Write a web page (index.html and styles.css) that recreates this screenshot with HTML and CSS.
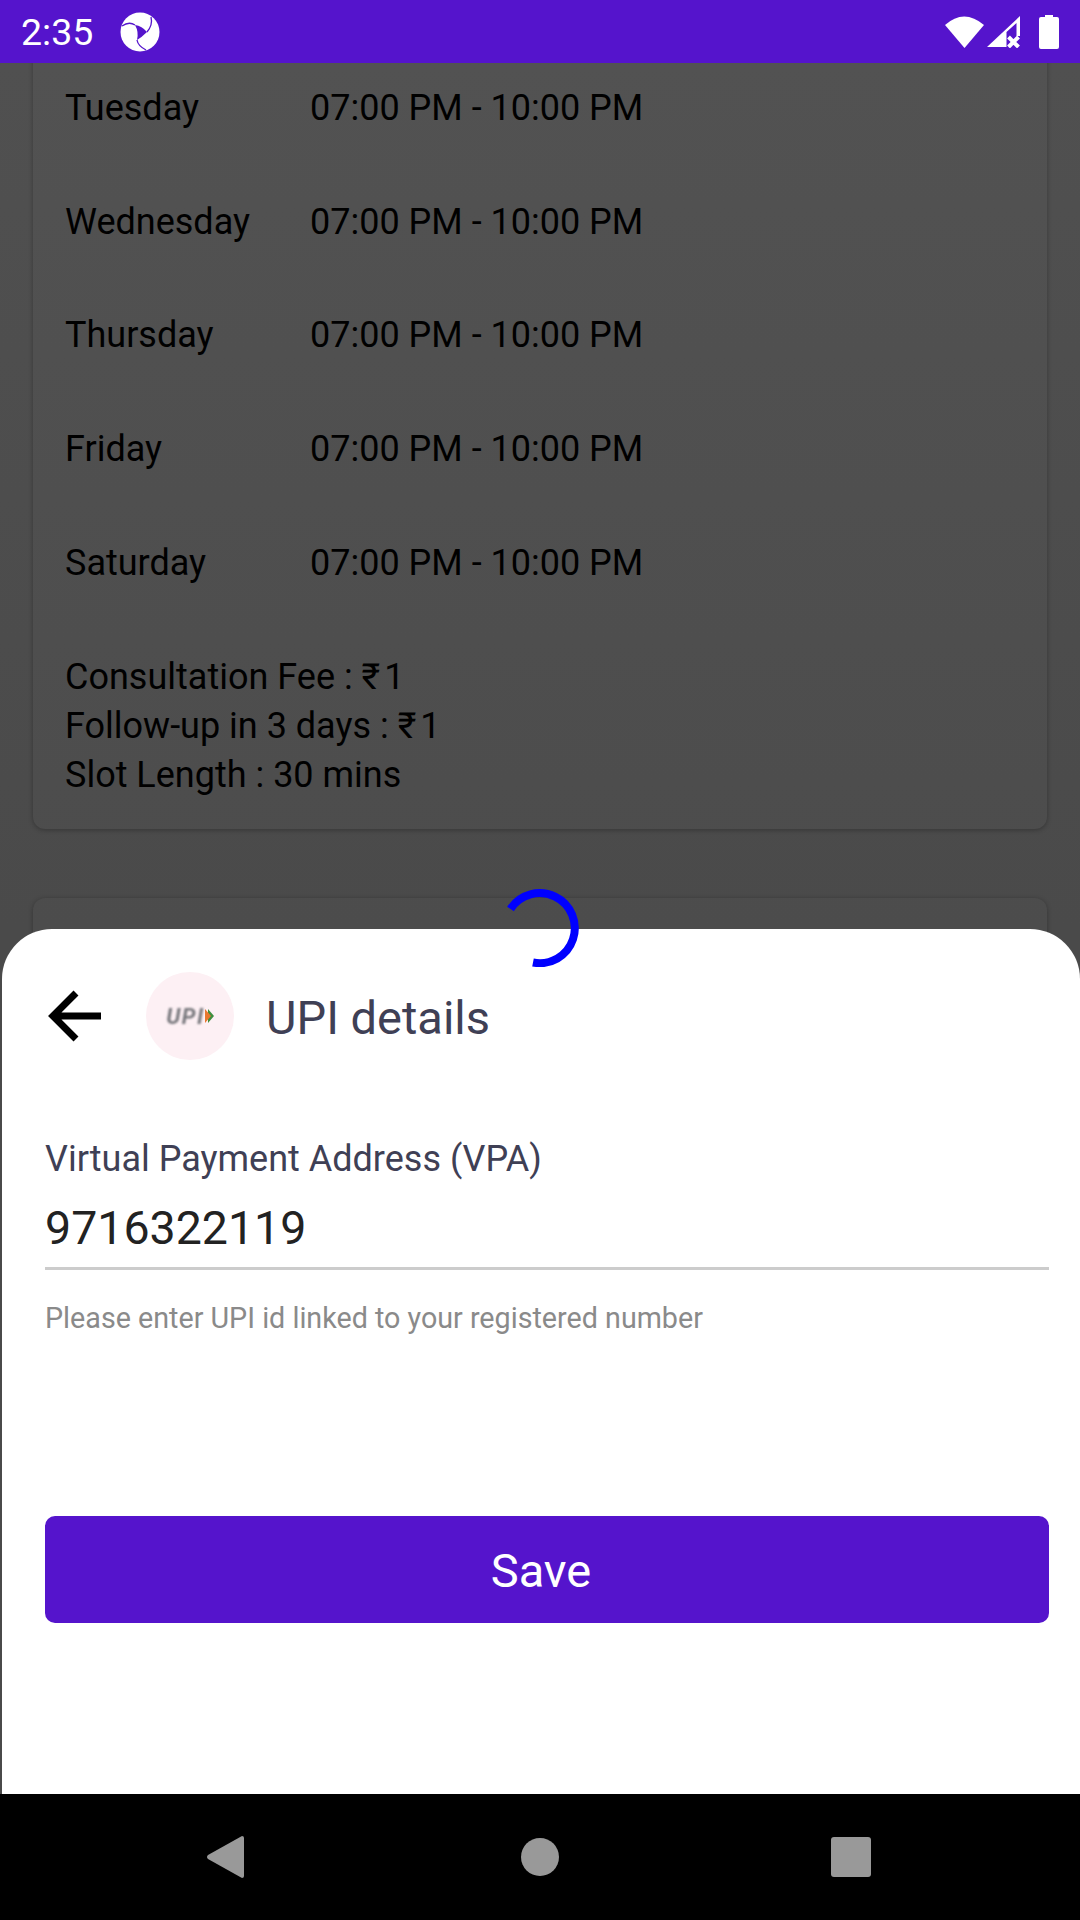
FILE: index.html
```html
<!DOCTYPE html>
<html>
<head>
  <meta charset="UTF-8">
  <title>UPI details</title>
  <link rel="stylesheet" href="styles.css">
</head>
<body>
  <div class="phone">
    <header class="status-bar">
      <span class="clock">2:35</span>
      <svg class="app-logo" viewBox="0 0 40 40">
        <circle cx="20" cy="20" r="19.5" fill="#fff"/>
        <path d="M15 13 Q22 14 27 20 Q22 25 17 28 Q19 20 15 13Z" fill="#5514cc"/>
        <g fill="none" stroke="#5514cc" stroke-width="1.300">
          <path d="M2 14 Q9 9 15 13"/>
          <path d="M31 5 Q33 13 27 20"/>
          <path d="M17 28 Q18 34 26 38"/>
        </g>
      </svg>
      <span class="status-spacer"></span>
      <svg class="wifi" viewBox="0 0 39 33"><path d="M0 10 Q19 -7 39 10 L19.500 33Z" fill="#fff"/></svg>
      <svg class="signal" viewBox="0 0 33 32">
        <path d="M0 31 L33 0 V31Z" fill="#fff"/>
        <path d="M19.500 31 V16 L29.500 7 V20 H33 V31Z" fill="#5514cc"/>
        <path d="M21.500 21 L31.500 31 M31.500 21 L21.500 31" stroke="#fff" stroke-width="4"/>
      </svg>
      <svg class="battery" viewBox="0 0 20 34"><path d="M6 0 H14 V2 H18 Q20 2 20 4 V32 Q20 34 18 34 H2 Q0 34 0 32 V4 Q0 2 2 2 H6Z" fill="#fff"/></svg>
    </header>

    <main class="screen">
      <section class="card card-hours">
        <div class="hours-row"><span class="day">Tuesday</span><span>07:00 PM - 10:00 PM</span></div>
        <div class="hours-row"><span class="day">Wednesday</span><span>07:00 PM - 10:00 PM</span></div>
        <div class="hours-row"><span class="day">Thursday</span><span>07:00 PM - 10:00 PM</span></div>
        <div class="hours-row"><span class="day">Friday</span><span>07:00 PM - 10:00 PM</span></div>
        <div class="hours-row"><span class="day">Saturday</span><span>07:00 PM - 10:00 PM</span></div>
        <div class="fees">
          <p>Consultation Fee : <span class="rupee">₹</span>1</p>
          <p>Follow-up in 3 days : <span class="rupee">₹</span>1</p>
          <p>Slot Length : 30 mins</p>
        </div>
      </section>
      <section class="card card-next"></section>

      <section class="sheet">
        <div class="sheet-head">
          <svg class="back" viewBox="0 0 53 52">
            <path d="M53 26 H5 M28 3 L5 26 L28 49" fill="none" stroke="#000" stroke-width="7"/>
          </svg>
          <div class="upi-badge">
            <span class="upi-mark">UPI</span>
            <svg class="upi-arrow" viewBox="0 0 9 14">
              <path d="M3 0 L9 7 L3 14Z" fill="#3f8f3f"/>
              <path d="M0 0 L6 7 L0 14Z" fill="#e8772e"/>
            </svg>
          </div>
          <h2 class="sheet-title">UPI details</h2>
        </div>
        <label class="field-label">Virtual Payment Address (VPA)</label>
        <div class="field-value">9716322119</div>
        <p class="field-help">Please enter UPI id linked to your registered number</p>
        <button class="save-btn">Save</button>
      </section>

      <svg class="spinner" viewBox="0 0 78 78">
        <path d="M9.500 20 A35 35 0 1 1 32 73.500" fill="none" stroke="#0000ff" stroke-width="8"/>
      </svg>
    </main>

    <footer class="nav-bar">
      <svg class="nav-back" viewBox="0 0 37 42"><path d="M35 0 Q37 0 37 2 V40 Q37 42 35 42 L1 23 Q-1 21 1 19Z" fill="#999"/></svg>
      <span class="nav-home"></span>
      <span class="nav-recent"></span>
    </footer>
  </div>
</body>
</html>
```

FILE: styles.css
```css
* {
  box-sizing: border-box;
}

html, body {
  margin: 0;
  padding: 0;
}

body {
  font-family: Roboto, "Liberation Sans", sans-serif;
  background: #000;
}

.phone {
  width: 1080px;
  height: 1920px;
  display: flex;
  flex-direction: column;
  overflow: hidden;
}

/* status bar */
.status-bar {
  height: 63px;
  flex: none;
  background: #5514cc;
  display: flex;
  align-items: center;
  padding: 0 21px;
  color: #fff;
}

.clock {
  font-size: 37.500px;
  width: 99px;
}

.app-logo {
  width: 40px;
  height: 40px;
}

.status-spacer {
  flex: 1;
}

.wifi {
  width: 39px;
  height: 33px;
}

.signal {
  width: 33px;
  height: 32px;
  margin-left: 3px;
}

.battery {
  width: 20px;
  height: 34px;
  margin-left: 19px;
}

/* dimmed screen behind the sheet */
.screen {
  flex: 1;
  position: relative;
  overflow: hidden;
  background: linear-gradient(#505050, #4a4a4a 866px);
}

.card {
  margin: 0 33px;
  background: rgba(255, 255, 255, 0.012);
  border-radius: 12px;
  box-shadow: 0 1px 5px rgba(0, 0, 0, 0.3);
}

.card-hours {
  margin-top: -20px;
  padding: 8px 32px 29px;
  color: #000;
  font-size: 36px;
}

.card-next {
  margin-top: 69px;
  height: 200px;
}

.hours-row {
  height: 113.800px;
  display: flex;
  align-items: center;
}

.day {
  width: 245px;
}

.fees {
  margin-top: 33px;
}

.fees p {
  margin: 0;
  line-height: 49px;
}

.rupee {
  letter-spacing: 4px;
}

/* bottom sheet */
.sheet {
  position: absolute;
  left: 2px;
  right: 0;
  top: 866px;
  bottom: 0;
  background: #fff;
  border-radius: 50px 50px 0 0;
  padding: 43px 31px 0 43px;
}

.sheet-head {
  display: flex;
  align-items: center;
  height: 88px;
}

.back {
  width: 53px;
  height: 52px;
  margin-left: 3px;
}

.upi-badge {
  width: 88px;
  height: 88px;
  margin-left: 45px;
  border-radius: 50%;
  background: #fdf0f4;
  display: flex;
  align-items: center;
  justify-content: center;
}

.upi-mark {
  font-size: 22px;
  font-weight: 700;
  font-style: italic;
  letter-spacing: 1.500px;
  color: #77777c;
  filter: blur(0.8px);
}

.upi-arrow {
  width: 9px;
  height: 14px;
}

.sheet-title {
  margin: 0 0 0 32px;
  padding-top: 3px;
  font-size: 47px;
  font-weight: 400;
  color: #3f4055;
}

.field-label {
  display: block;
  margin-top: 79px;
  font-size: 36px;
  line-height: 40px;
  color: #3f4055;
}

.field-value {
  height: 73px;
  margin-top: 18px;
  padding-top: 4px;
  font-size: 46.500px;
  line-height: 54px;
  color: #222;
  border-bottom: 3px solid #ccc;
}

.field-help {
  margin: 32px 0 0;
  font-size: 28.700px;
  line-height: 32px;
  color: #8a8a8a;
}

.save-btn {
  display: block;
  width: 100%;
  height: 107px;
  margin-top: 182px;
  padding: 2px 12px 0 0;
  border: 0;
  border-radius: 10px;
  background: #5514cc;
  color: #fff;
  font-family: inherit;
  font-size: 47px;
}

.spinner {
  position: absolute;
  left: 501px;
  top: 826px;
  width: 78px;
  height: 78px;
}

/* android nav */
.nav-bar {
  height: 126px;
  flex: none;
  background: #000;
  position: relative;
}

.nav-back {
  position: absolute;
  left: 207px;
  top: 42px;
  width: 37px;
  height: 42px;
}

.nav-home {
  position: absolute;
  left: 521px;
  top: 44px;
  width: 38px;
  height: 38px;
  border-radius: 50%;
  background: #999;
}

.nav-recent {
  position: absolute;
  left: 831px;
  top: 43px;
  width: 40px;
  height: 40px;
  border-radius: 3px;
  background: #999;
}
```
